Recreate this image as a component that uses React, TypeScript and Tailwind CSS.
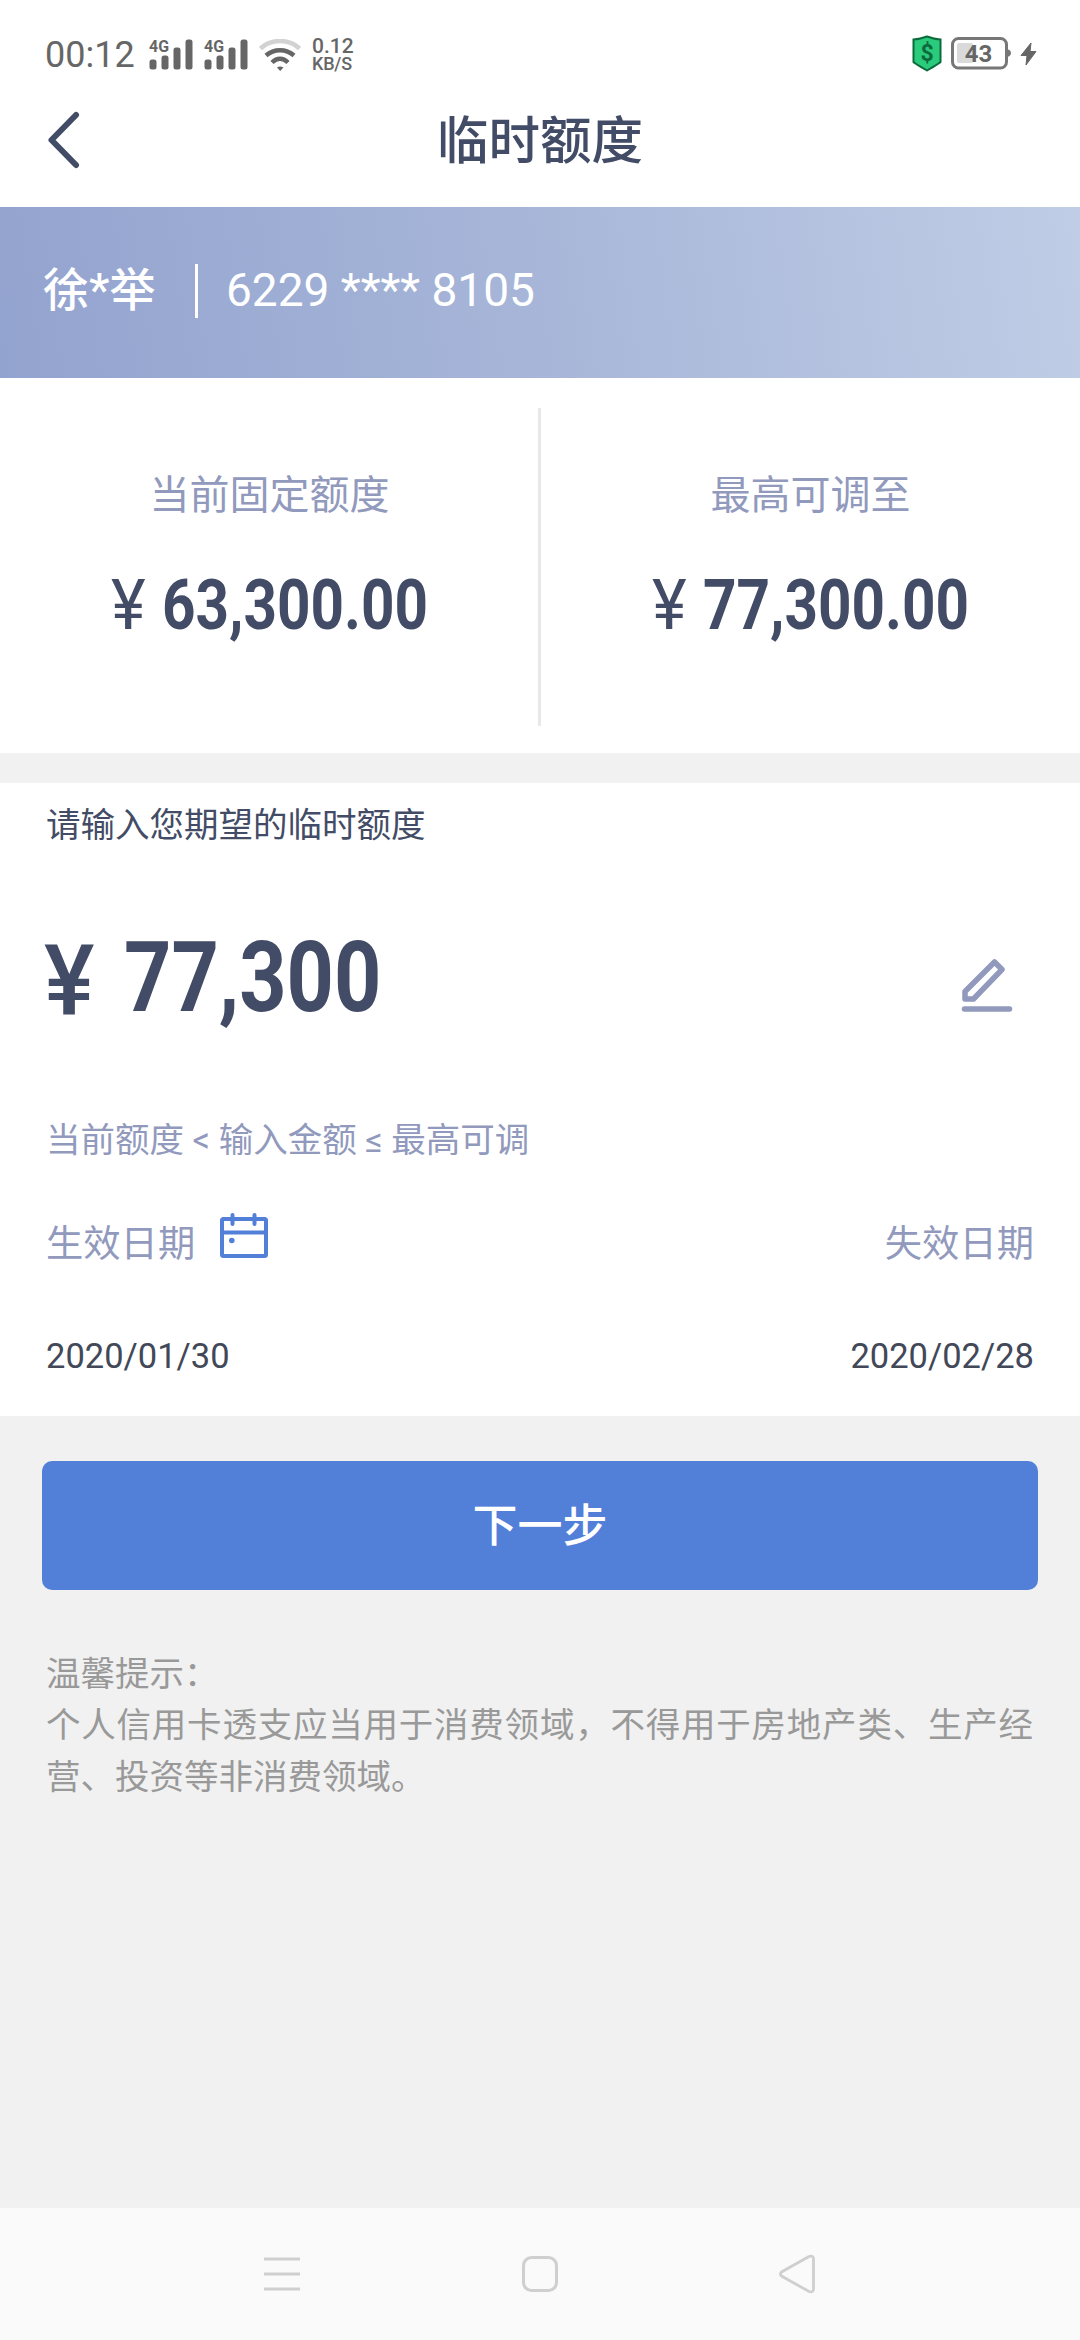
const CJK = "font-['Roboto','Noto_Sans_CJK_SC',sans-serif]";

function Signal() {
  return (
    <svg width="44" height="37" viewBox="0 -5 44 37" fill="#666">
      <text x="0" y="12.5" fontSize="16" fontWeight="700" fontFamily="Roboto, sans-serif" textLength="20" lengthAdjust="spacingAndGlyphs">4G</text>
      <rect x="0.5" y="20.5" width="7" height="10" rx="2.5" />
      <rect x="12.5" y="16.5" width="7" height="14" rx="2.5" />
      <rect x="24.5" y="8.5" width="7" height="22" rx="2.5" />
      <rect x="36.5" y="0.5" width="7" height="30" rx="2.5" />
    </svg>
  );
}

function Wifi() {
  return (
    <svg width="42" height="33" viewBox="0 0 42 33" fill="none" stroke="#666" strokeWidth="4.5">
      <path d="M1.5 9.5C12 -0.5 30 -0.5 40.5 9.5" stroke="#d2d2d2" />
      <path d="M7 16.5C15 9.5 27 9.5 35 16.5" />
      <path d="M13 23.5C18 18.6 24 18.6 29 23.5" />
      <path d="M18 28.5Q21 26.5 24.5 28.5L21.2 32Z" fill="#666" stroke="none" />
    </svg>
  );
}

function StatusBar() {
  return (
    <div className="flex h-[72px] items-end justify-between pl-[45px] pr-[43px] text-[#666]">
      <div className="flex items-end">
        <span className="w-[104px] text-[36px] leading-[33px]">00:12</span>
        <div className="mb-px flex gap-[11px]">
          <Signal />
          <Signal />
        </div>
        <div className="ml-[11px]">
          <Wifi />
        </div>
        <div className="ml-[11px] flex flex-col font-medium">
          <span className="text-[21px] leading-[18px]">0.12</span>
          <span className="text-[18px] leading-[17px] tracking-[-0.2px]">KB/S</span>
        </div>
      </div>
      <div className="flex items-center">
        <svg width="30" height="37" viewBox="0 0 30 37">
          <path d="M15 1.5Q22 4 28.5 4.5V27Q28 28 15 35.5Q2 28 1.5 27V4.5Q8 4 15 1.5Z" fill="#2bcb7c" stroke="#0c6b3c" strokeWidth="2" />
          <text x="15" y="26" fontSize="23" fontWeight="700" fontFamily="Roboto, sans-serif" textAnchor="middle" fill="#0c6b3c">$</text>
        </svg>
        <svg className="ml-[9px]" width="60" height="33" viewBox="0 0 60 33">
          <rect x="1.5" y="1.5" width="54" height="29.5" rx="6" fill="none" stroke="#777" strokeWidth="3" />
          <path d="M56 12Q60 13 60 16Q60 19 56 20Z" fill="#777" />
          <rect x="6" y="6" width="16" height="20" rx="2" fill="#dadada" />
          <text x="27.5" y="24.5" fontSize="24" fontWeight="700" fontFamily="Roboto, sans-serif" textAnchor="middle" fill="#666">43</text>
        </svg>
        <svg className="ml-[9px]" width="17" height="24" viewBox="0 0 17 24">
          <path d="M11 1L1 13.5H7L6 23L16 9.5H10Z" fill="#666" stroke="#666" strokeLinejoin="round" />
        </svg>
      </div>
    </div>
  );
}

function Header() {
  return (
    <header className="grid h-[135px] grid-cols-[1fr_auto_1fr] items-center pl-[47px]">
      <svg width="34" height="60" viewBox="0 0 34 60" fill="none" stroke="#434c66" strokeWidth="6" strokeLinecap="round" strokeLinejoin="round">
        <path d="M29 5L4.5 30L29 55" />
      </svg>
      <h1 className="mt-[5px] -ml-[47px] text-[51.5px] font-medium text-[#434c66]">临时额度</h1>
    </header>
  );
}

function LimitCell({ label, amount }: { label: string; amount: string }) {
  return (
    <div className="flex flex-1 flex-col items-center pt-[88px]">
      <div className="text-[40px] leading-[60px] text-[#9199bd]">{label}</div>
      <div className="mt-[41px] flex h-[76px] items-center justify-center text-[70px] leading-[76px] font-bold text-[#434c66]">
        <span className="w-[51px] font-normal">
          <span className="inline-block origin-left scale-x-[0.94]">¥</span>
        </span>
        <span className="w-[266px] whitespace-nowrap">
          <span className="inline-block origin-left scale-x-[0.835]">{amount}</span>
        </span>
      </div>
    </div>
  );
}

function CalendarIcon() {
  return (
    <svg width="48" height="46" viewBox="0 0 48 46" fill="none" stroke="#527fd8" strokeWidth="4" strokeLinecap="round">
      <rect x="2" y="6" width="44" height="37" rx="1.5" />
      <path d="M2 19.5H46M12.5 2V11M34.5 2V11" />
      <circle cx="11.8" cy="27.5" r="2.8" fill="#527fd8" stroke="none" />
    </svg>
  );
}

function EditIcon() {
  return (
    <svg width="52" height="56" viewBox="0 0 52 56" fill="none" stroke="#9199bd" strokeWidth="5.5" strokeLinejoin="round">
      <path d="M33.5 4L41 11.5L12.5 41H4V33.5Z" />
      <path d="M3.5 51H48.5" strokeLinecap="round" />
    </svg>
  );
}

function NavBar() {
  return (
    <nav className="flex h-[132px] items-center justify-between bg-[#fafafa] pr-[264px] pl-[264px] text-[#cfcfcf]">
      <svg width="36" height="40" viewBox="0 0 36 40" stroke="currentColor" strokeWidth="3">
        <path d="M0 5H36M0 20H36M0 35H36" />
      </svg>
      <svg className="ml-[2px]" width="36" height="36" viewBox="0 0 36 36" fill="none" stroke="currentColor" strokeWidth="3">
        <rect x="1.5" y="1.5" width="33" height="33" rx="8" />
      </svg>
      <svg width="38" height="40" viewBox="0 0 38 40" fill="none" stroke="currentColor" strokeWidth="2.8">
        <path d="M31 2.5L3.5 18Q1.5 20 3.5 22L31 37.5Q35.5 39 35.5 35V5Q35.5 1 31 2.5Z" />
      </svg>
    </nav>
  );
}

export default function App() {
  return (
    <div lang="zh-CN" className={`flex h-[2340px] w-[1080px] flex-col overflow-hidden bg-[#f1f1f1] ${CJK}`}>
      <div className="bg-white">
        <StatusBar />
        <Header />
      </div>

      {/* 持卡人 */}
      <div className="flex h-[171px] items-center bg-[linear-gradient(82deg,#93a3cf_0%,#a5b4d7_45%,#bfcde6_100%)] pb-[4px] pl-[43px] text-white">
        <span className="w-[152px] text-[46px] font-medium">徐*举</span>
        <span className="h-[54px] w-[3px] bg-white" />
        <span className="ml-[28px] text-[46px]">6229 **** 8105</span>
      </div>

      {/* 额度 */}
      <div className="flex h-[375px] bg-white">
        <LimitCell label="当前固定额度" amount="63,300.00" />
        <div className="mt-[30px] -ml-px h-[318px] w-[3px] bg-[#e8e8e8]" />
        <LimitCell label="最高可调至" amount="77,300.00" />
      </div>

      <div className="mt-[30px] h-[633px] bg-white px-[46px] text-[#434c66]">
        <div className="pt-[17px] text-[34.5px] leading-[50px]">请输入您期望的临时额度</div>
        <div className="mt-[79px] flex h-[100px] items-center justify-between text-[98px] leading-[100px] font-bold">
          <div className="flex">
            <span className="-ml-[2px] w-[80px] pt-[3px] font-medium">
              <span className="inline-block origin-left scale-x-[0.97]">¥</span>
            </span>
            <span className="inline-block origin-left scale-x-[0.843]">77,300</span>
          </div>
          <div className="mt-[13px] mr-[21px]">
            <EditIcon />
          </div>
        </div>
        <div className="mt-[86px] text-[34.5px] leading-[50px] text-[#9199bd]">当前额度 &lt; 输入金额 ≤ 最高可调</div>
        <div className="mt-[52px] flex h-[56px] items-center justify-between text-[37.3px] text-[#9199bd]">
          <div className="flex items-center gap-[25px]">
            <span>生效日期</span>
            <div className="-mt-[18px]">
              <CalendarIcon />
            </div>
          </div>
          <span>失效日期</span>
        </div>
        <div className="mt-[61px] flex justify-between text-[34.5px] leading-[44px] text-[#424858]">
          <span>2020/01/30</span>
          <span>2020/02/28</span>
        </div>
      </div>

      <button className="mx-[42px] mt-[45px] h-[129px] shrink-0 rounded-[10px] bg-[#527fd8] pt-[2px] text-[45px] font-medium text-white">下一步</button>

      <div className="mt-[59px] flex-1 pr-[47px] pl-[46px] text-justify text-[34.5px] leading-[51.4px] text-[#999]">
        <p>温馨提示：</p>
        <p>个人信用卡透支应当用于消费领域，不得用于房地产类、生产经营、投资等非消费领域。</p>
      </div>

      <NavBar />
    </div>
  );
}
